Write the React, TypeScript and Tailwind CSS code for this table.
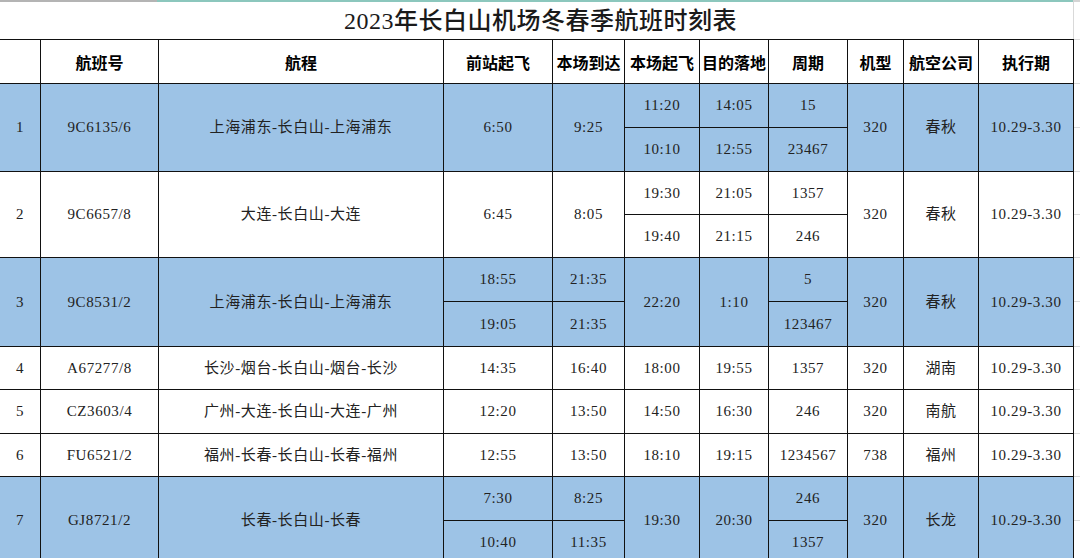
import React from "react";

type Field = string | string[];
interface Item {
  start: number;
  n: 1 | 2;
  blue: boolean;
  f: Field[];
}

const ROW: Record<number, string> = {
  1: "row-start-1",
  2: "row-start-2",
  3: "row-start-3",
  4: "row-start-4",
  5: "row-start-5",
  6: "row-start-6",
  7: "row-start-7",
  8: "row-start-8",
  9: "row-start-9",
  10: "row-start-10",
  11: "row-start-11",
  12: "row-start-12",
  13: "row-start-13",
};

const COL: Record<number, string> = {
  1: "col-start-1",
  2: "col-start-2",
  3: "col-start-3",
  4: "col-start-4",
  5: "col-start-5",
  6: "col-start-6",
  7: "col-start-7",
  8: "col-start-8",
  9: "col-start-9",
  10: "col-start-10",
  11: "col-start-11",
};

const HEADERS = ["", "航班号", "航程", "前站起飞", "本场到达", "本场起飞", "目的落地", "周期", "机型", "航空公司", "执行期"];

const ITEMS: Item[] = [
  {
    start: 2,
    n: 2,
    blue: true,
    f: ["1", "9C6135/6", "上海浦东-长白山-上海浦东", "6:50", "9:25", ["11:20", "10:10"], ["14:05", "12:55"], ["15", "23467"], "320", "春秋", "10.29-3.30"],
  },
  {
    start: 4,
    n: 2,
    blue: false,
    f: ["2", "9C6657/8", "大连-长白山-大连", "6:45", "8:05", ["19:30", "19:40"], ["21:05", "21:15"], ["1357", "246"], "320", "春秋", "10.29-3.30"],
  },
  {
    start: 6,
    n: 2,
    blue: true,
    f: ["3", "9C8531/2", "上海浦东-长白山-上海浦东", ["18:55", "19:05"], ["21:35", "21:35"], "22:20", "1:10", ["5", "123467"], "320", "春秋", "10.29-3.30"],
  },
  {
    start: 8,
    n: 1,
    blue: false,
    f: ["4", "A67277/8", "长沙-烟台-长白山-烟台-长沙", "14:35", "16:40", "18:00", "19:55", "1357", "320", "湖南", "10.29-3.30"],
  },
  {
    start: 9,
    n: 1,
    blue: false,
    f: ["5", "CZ3603/4", "广州-大连-长白山-大连-广州", "12:20", "13:50", "14:50", "16:30", "246", "320", "南航", "10.29-3.30"],
  },
  {
    start: 10,
    n: 1,
    blue: false,
    f: ["6", "FU6521/2", "福州-长春-长白山-长春-福州", "12:55", "13:50", "18:10", "19:15", "1234567", "738", "福州", "10.29-3.30"],
  },
  {
    start: 11,
    n: 2,
    blue: true,
    f: ["7", "GJ8721/2", "长春-长白山-长春", ["7:30", "10:40"], ["8:25", "11:35"], "19:30", "20:30", ["246", "1357"], "320", "长龙", "10.29-3.30"],
  },
];

const GRID_ROWS = "grid-rows-[43px_43px_43px_42px_42px_43px_44px_42px_43px_42px_43px_43px_43px]";

export default function App() {
  const cells: React.ReactNode[] = [];

  HEADERS.forEach((h, c) => {
    cells.push(
      <div
        key={`h${c}`}
        className={`${COL[c + 1]} row-start-1 bg-white flex items-center justify-center text-[16px] font-bold text-black font-['Noto_Sans_CJK_SC',sans-serif] whitespace-nowrap`}
      >
        {h}
      </div>
    );
  });

  ITEMS.forEach((it, i) => {
    const bg = it.blue ? "bg-[#9dc3e6]" : "bg-white";
    it.f.forEach((field, c) => {
      if (Array.isArray(field)) {
        field.forEach((v, k) => {
          cells.push(
            <div
              key={`c${i}-${c}-${k}`}
              className={`${COL[c + 1]} ${ROW[it.start + k]} ${bg} flex items-center justify-center text-[15px] tracking-[0.6px] text-[#222] whitespace-nowrap`}
            >
              {v}
            </div>
          );
        });
      } else {
        cells.push(
          <div
            key={`c${i}-${c}`}
            className={`${COL[c + 1]} ${ROW[it.start]} ${it.n === 2 ? "row-span-2" : ""} ${bg} flex items-center justify-center text-[15px] tracking-[0.6px] text-[#222] whitespace-nowrap`}
          >
            {field}
          </div>
        );
      }
    });
  });

  return (
    <div className="w-[1080px] bg-white font-['Liberation_Serif','Noto_Sans_CJK_SC',serif] overflow-hidden">
      {/* top excel strip */}
      <div className="flex h-[2px]">
        <div className="w-[157px] bg-[#b4b4b4]" />
        <div className="w-[916px] bg-[#8cc7bd]" />
        <div className="flex-1 bg-[#d4d4d4]" />
      </div>
      {/* title */}
      <div className="flex h-[37px]">
        <div className="w-[1073px] flex items-center justify-center text-[24px] font-medium text-[#1a1a1a] tracking-[0.5px] pl-[8px]">
          2023年长白山机场冬春季航班时刻表
        </div>
        <div className="flex-1 border-l border-[#d9d9d9]" />
      </div>
      {/* table */}
      <div className="flex items-start">
        <div
          className={`grid grid-cols-[40px_117px_284px_108px_71px_74px_68px_78px_55px_74px_94px] ${GRID_ROWS} gap-px bg-[#111] pt-px pr-px`}
        >
          {cells}
        </div>
        <div className={`flex-1 grid grid-cols-1 ${GRID_ROWS} gap-px bg-[#dcdcdc] pt-px`}>
          {Array.from({ length: 13 }).map((_, k) => (
            <div key={k} className="bg-white" />
          ))}
        </div>
      </div>
    </div>
  );
}
